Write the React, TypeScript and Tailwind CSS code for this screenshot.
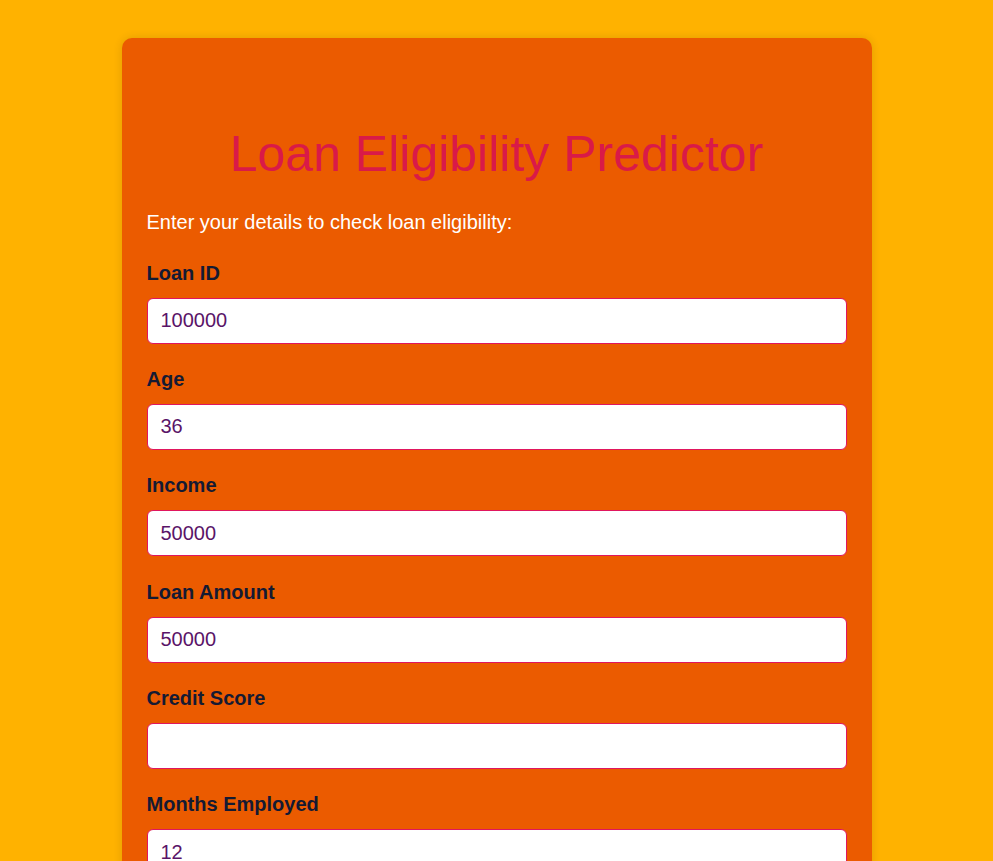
import React, { useState } from 'react';

// --- Form fields ---
const fields: { name: string; label: string; value: string }[] = [
  { name: 'loanId', label: 'Loan ID', value: '100000' },
  { name: 'age', label: 'Age', value: '36' },
  { name: 'income', label: 'Income', value: '50000' },
  { name: 'loanAmount', label: 'Loan Amount', value: '50000' },
  { name: 'creditScore', label: 'Credit Score', value: '' },
  { name: 'monthsEmployed', label: 'Months Employed', value: '12' },
  { name: 'numCreditLines', label: 'Number of Credit Lines', value: '2' },
  { name: 'interestRate', label: 'Interest Rate', value: '5' },
  { name: 'loanTerm', label: 'Loan Term', value: '36' },
];

const Field: React.FC<{ label: string; value: string; onChange: (v: string) => void }> = ({ label, value, onChange }) => (
  <div className="mb-[24.4px]">
    <label className="block text-[20px] leading-[23px] font-bold text-[#141a33] mb-[13px]">{label}</label>
    <input
      type="text"
      value={value}
      onChange={(e) => onChange(e.target.value)}
      className="block w-full h-[46px] px-[13px] rounded-[6px] border border-[#e0165e] bg-white text-[20px] text-[#5a1468] outline-none"
    />
  </div>
);

export default function App() {
  const [values, setValues] = useState<Record<string, string>>(
    Object.fromEntries(fields.map((f) => [f.name, f.value]))
  );

  return (
    <div className="min-h-screen bg-[#ffb200] pt-[38px] pb-10 font-['Liberation_Sans',Arial,sans-serif]">
      <div className="mx-auto w-[750px] bg-[#eb5b00] rounded-[10px] shadow-[0_0_10px_rgba(0,0,0,0.12)] px-[25px] pt-[88px] pb-[25px]">
        <h1 className="text-center text-[50px] leading-[57.5px] text-[#d91a48]">Loan Eligibility Predictor</h1>
        <p className="mt-[27px] text-[20px] leading-[23px] text-white">Enter your details to check loan eligibility:</p>
        <form className="mt-[28px]" onSubmit={(e) => e.preventDefault()}>
          {fields.map((f) => (
            <Field
              key={f.name}
              label={f.label}
              value={values[f.name]}
              onChange={(v) => setValues((s) => ({ ...s, [f.name]: v }))}
            />
          ))}
          <button type="submit" className="w-full h-[48px] rounded-[6px] bg-[#d91a48] text-white text-[20px] font-bold">
            Check Eligibility
          </button>
        </form>
      </div>
    </div>
  );
}
